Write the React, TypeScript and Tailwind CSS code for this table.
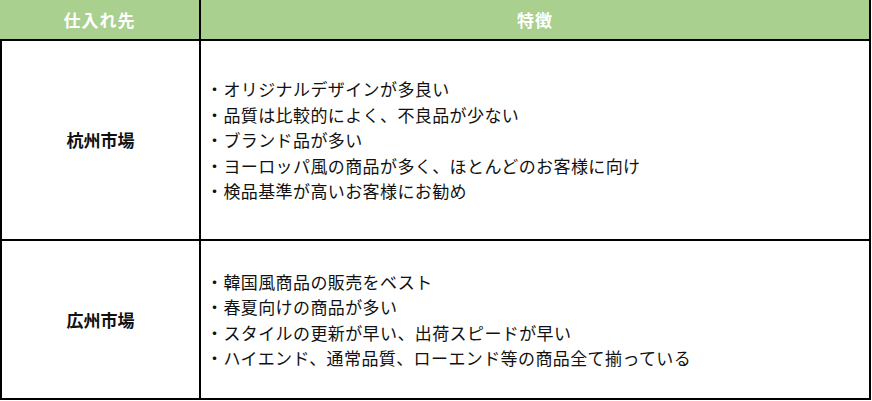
const rows = [
  {
    name: '杭州市場',
    height: 'h-[200px]',
    items: [
      '・オリジナルデザインが多良い',
      '・品質は比較的によく、不良品が少ない',
      '・ブランド品が多い',
      '・ヨーロッパ風の商品が多く、ほとんどのお客様に向け',
      '・検品基準が高いお客様にお勧め',
    ],
  },
  {
    name: '広州市場',
    height: 'h-[159px]',
    items: [
      '・韓国風商品の販売をベスト',
      '・春夏向けの商品が多い',
      '・スタイルの更新が早い、出荷スピードが早い',
      '・ハイエンド、通常品質、ローエンド等の商品全て揃っている',
    ],
  },
]

const App = () => {
  return (
    <div className="w-[872px] h-[401px] bg-white font-['Noto_Sans_CJK_JP',sans-serif] text-[#111]">
      <div className="w-[871px] border-r-2 border-black">
        {/* Header */}
        <div className="flex h-[41px] border-b-2 border-black bg-[#a9d08e] text-white font-bold text-[17px]">
          <div className="w-[201px] border-r-2 border-black flex items-center justify-center tracking-[1px]">
            仕入れ先
          </div>
          <div className="flex-1 flex items-center justify-center tracking-[1px]">特徴</div>
        </div>

        {/* Rows */}
        {rows.map((row) => (
          <div key={row.name} className={`flex ${row.height} border-b-2 border-l-2 border-black`}>
            <div className="w-[199px] border-r-2 border-black flex items-center justify-center font-bold text-[17px]">
              {row.name}
            </div>
            <div className="flex-1 flex flex-col justify-center pl-[5px] text-[17px] leading-[25.5px] tracking-[0.4px]">
              {row.items.map((item) => (
                <div key={item}>{item}</div>
              ))}
            </div>
          </div>
        ))}
      </div>
    </div>
  )
}

export default App
